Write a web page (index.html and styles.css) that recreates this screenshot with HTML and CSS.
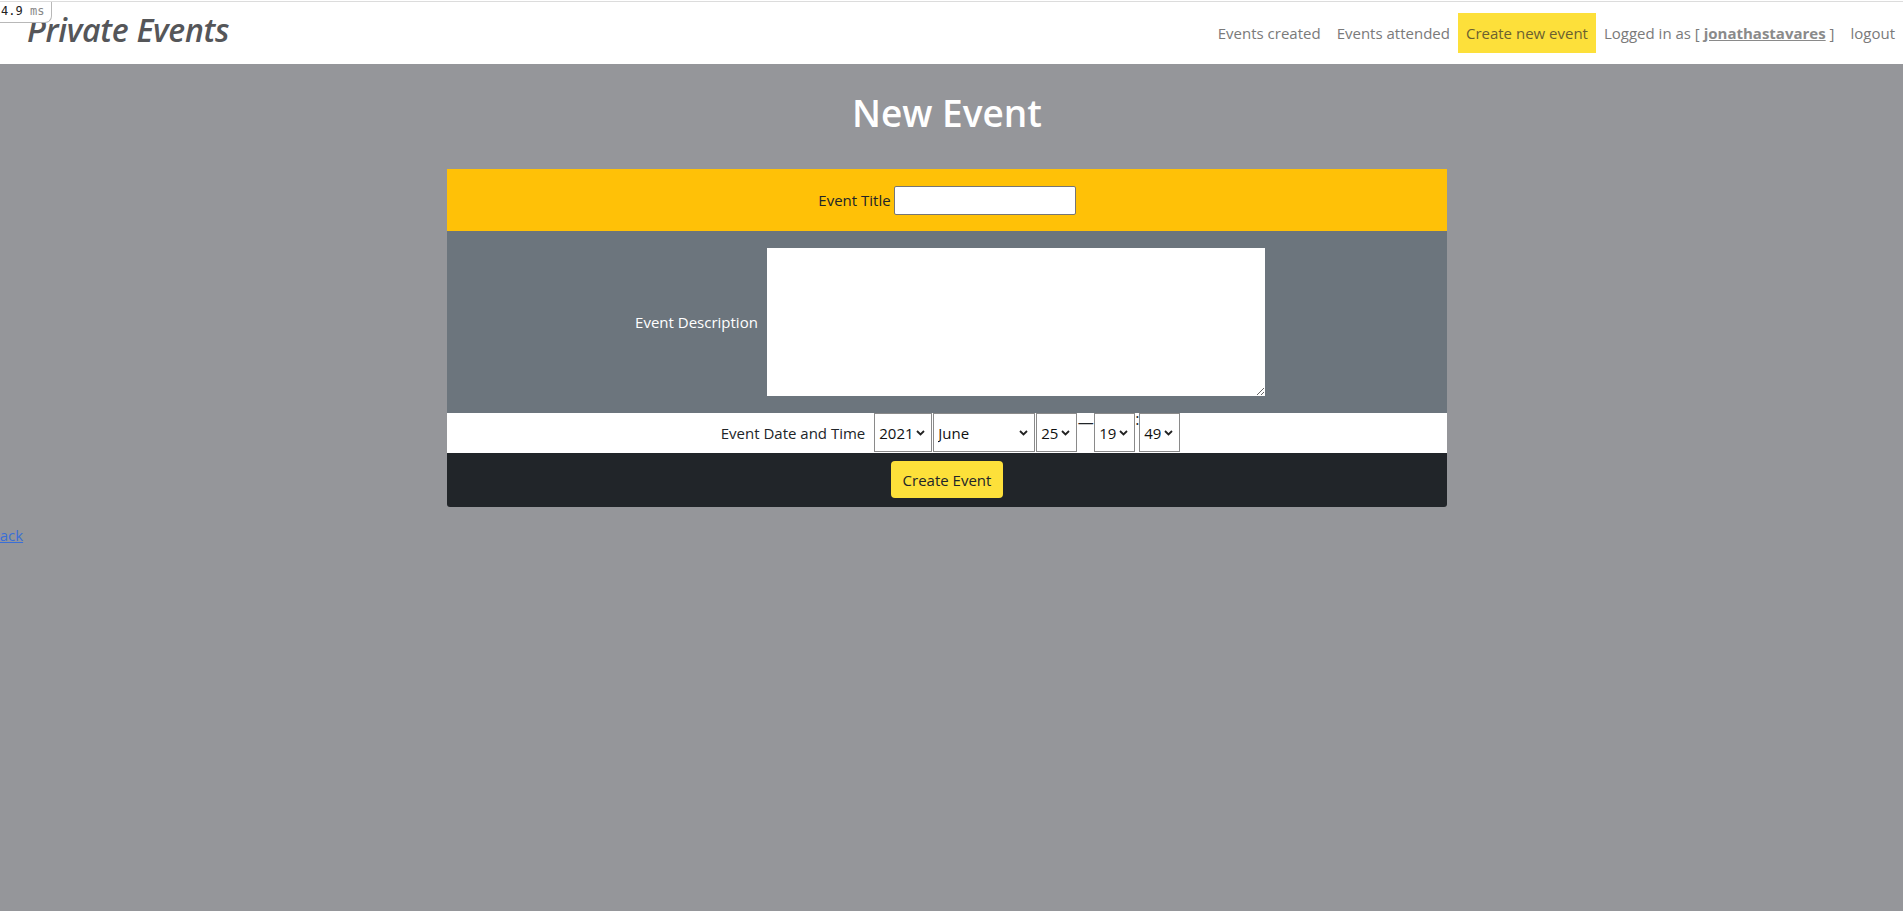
FILE: index.html
```html
<!DOCTYPE html>
<html lang="en">
<head>
<meta charset="utf-8">
<title>Private Events</title>
<link rel="stylesheet" href="styles.css">
</head>
<body>
<div class="profiler"><span class="pf-num">4.9</span> <span class="pf-unit">ms</span></div>
<nav class="navbar">
  <a class="brand" href="#">Private Events</a>
  <ul class="nav">
    <li><a class="nav-link" href="#">Events created</a></li>
    <li><a class="nav-link" href="#">Events attended</a></li>
    <li><a class="nav-link active" href="#">Create new event</a></li>
    <li><span class="nav-text">Logged in as [ <a class="user" href="#">jonathastavares</a> ]</span></li>
    <li><a class="nav-link" href="#">logout</a></li>
  </ul>
</nav>
<main class="main">
  <h1 class="page-title">New Event</h1>
  <form class="event-form">
    <div class="frow frow-title">
      <label class="flabel" for="title">Event Title</label>
      <input class="title-input" id="title" type="text">
    </div>
    <div class="frow frow-desc">
      <label class="flabel flabel-light" for="desc">Event Description</label>
      <textarea class="desc-input" id="desc"></textarea>
    </div>
    <div class="frow frow-date">
      <label class="flabel flabel-date">Event Date and Time</label>
      <select class="sel sel-year"><option>2021</option></select>
      <select class="sel sel-month"><option>June</option></select>
      <select class="sel sel-day"><option>25</option></select>
      <span class="sep sep-dash">—</span>
      <select class="sel sel-hour"><option>19</option></select>
      <span class="sep sep-colon">:</span>
      <select class="sel sel-min"><option>49</option></select>
    </div>
    <div class="frow frow-submit">
      <button class="btn-create" type="button">Create Event</button>
    </div>
  </form>
</main>
<a class="back" href="#">Back</a>
</body>
</html>
```

FILE: styles.css
```css
* { box-sizing: border-box; }

html, body {
  margin: 0;
  padding: 0;
}

body {
  background: #95969a;
  font-family: "Open Sans", "Noto Sans", sans-serif;
  font-size: 15px;
  color: #212529;
  min-height: 911px;
  overflow: hidden;
}

.profiler {
  position: absolute;
  top: 2px;
  left: 0;
  height: 21px;
  padding: 0 7px 0 1px;
  background: #fff;
  border: 1px solid #b8b8b8;
  border-left: none;
  border-top: none;
  border-bottom-right-radius: 7px;
  font-family: "DejaVu Sans Mono", "Liberation Mono", monospace;
  font-size: 12px;
  line-height: 19px;
  color: #222;
  z-index: 5;
}
.pf-unit { color: #888; }

.navbar {
  display: flex;
  align-items: center;
  justify-content: space-between;
  height: 64px;
  padding: 2px 0 0 27px;
  background: linear-gradient(#fff 0 1px, #dcdcdc 1px 2px, #fff 2px);
}

.brand {
  margin-bottom: 6px;
  font-size: 32px;
  line-height: 40px;
  font-style: italic;
  font-weight: 600;
  color: #555659;
  text-decoration: none;
  letter-spacing: -0.3px;
}

.nav {
  display: flex;
  align-items: center;
  list-style: none;
  margin: 0;
  padding: 0;
}

.nav-link, .nav-text {
  display: block;
  padding: 8px 8px;
  line-height: 24px;
  color: #7a7a7a;
  text-decoration: none;
}
.nav-link.active {
  background: #fde03a;
  color: #6b6030;
}
.user {
  font-weight: 700;
  color: #8a8a8a;
  text-decoration: underline;
}

.main {
  padding-right: 9px;
}

.page-title {
  margin: 26px 0 33px;
  text-align: center;
  color: #fff;
  font-size: 37px;
  font-weight: 600;
  line-height: 46px;
}

.event-form {
  width: 1000px;
  margin: 0 auto;
  border-radius: 0 0 3px 3px;
  overflow: hidden;
}

.frow {
  display: flex;
  align-items: center;
  justify-content: center;
}

.frow-title {
  height: 62px;
  background: #ffc107;
}
.flabel { margin-right: 3px; }

.title-input {
  width: 182px;
  height: 29px;
  border: 1px solid #767676;
  border-radius: 2px;
  background: #fff;
  font: inherit;
}

.frow-desc {
  height: 182px;
  background: #6c757d;
  padding-left: 6px;
}
.flabel-light { color: #fff; margin-right: 9px; }
.desc-input {
  width: 498px;
  height: 148px;
  border: none;
  background: #fff;
  resize: both;
  font: inherit;
}

.frow-date {
  height: 40px;
  background: #fff;
  align-items: stretch;
  padding-left: 7px;
}
.flabel-date {
  align-self: center;
  margin-right: 9px;
}

.sel {
  appearance: none;
  -webkit-appearance: none;
  height: 39px;
  margin: 0;
  padding: 0 18px 0 4px;
  border: 1px solid #8a8a8a;
  border-radius: 0;
  background: #fff url("data:image/svg+xml,%3Csvg xmlns='http://www.w3.org/2000/svg' width='9' height='6' viewBox='0 0 9 6'%3E%3Cpath d='M1 1l3.5 3.5L8 1' fill='none' stroke='%23222' stroke-width='1.8'/%3E%3C/svg%3E") no-repeat right 6px center;
  font-family: inherit;
  font-size: 15px;
  color: #111;
}
.sel-year { width: 58px; margin-right: 1px; }
.sel-month { width: 102px; margin-right: 1px; }
.sel-day { width: 41px; }
.sel-hour { width: 41px; }
.sel-min { width: 41px; }

.sep {
  display: block;
  line-height: 1;
  font-size: 16px;
}
.sep-dash {
  width: 17px;
  margin-top: 2px;
  text-align: center;
  line-height: 14px;
}
.sep-colon {
  width: 4px;
  line-height: 20px;
  margin-top: -4px;
  text-align: center;
}

.frow-submit {
  height: 54px;
  background: #212529;
  padding-bottom: 1px;
}
.btn-create {
  height: 37px;
  padding: 0 12px;
  border: none;
  border-radius: 4px;
  background: #fde03a;
  color: #212529;
  font-family: inherit;
  font-size: 15px;
}

.back {
  display: inline-block;
  margin: 18px 0 0 -10px;
  color: #3b6fd6;
  text-decoration: underline;
}
```
